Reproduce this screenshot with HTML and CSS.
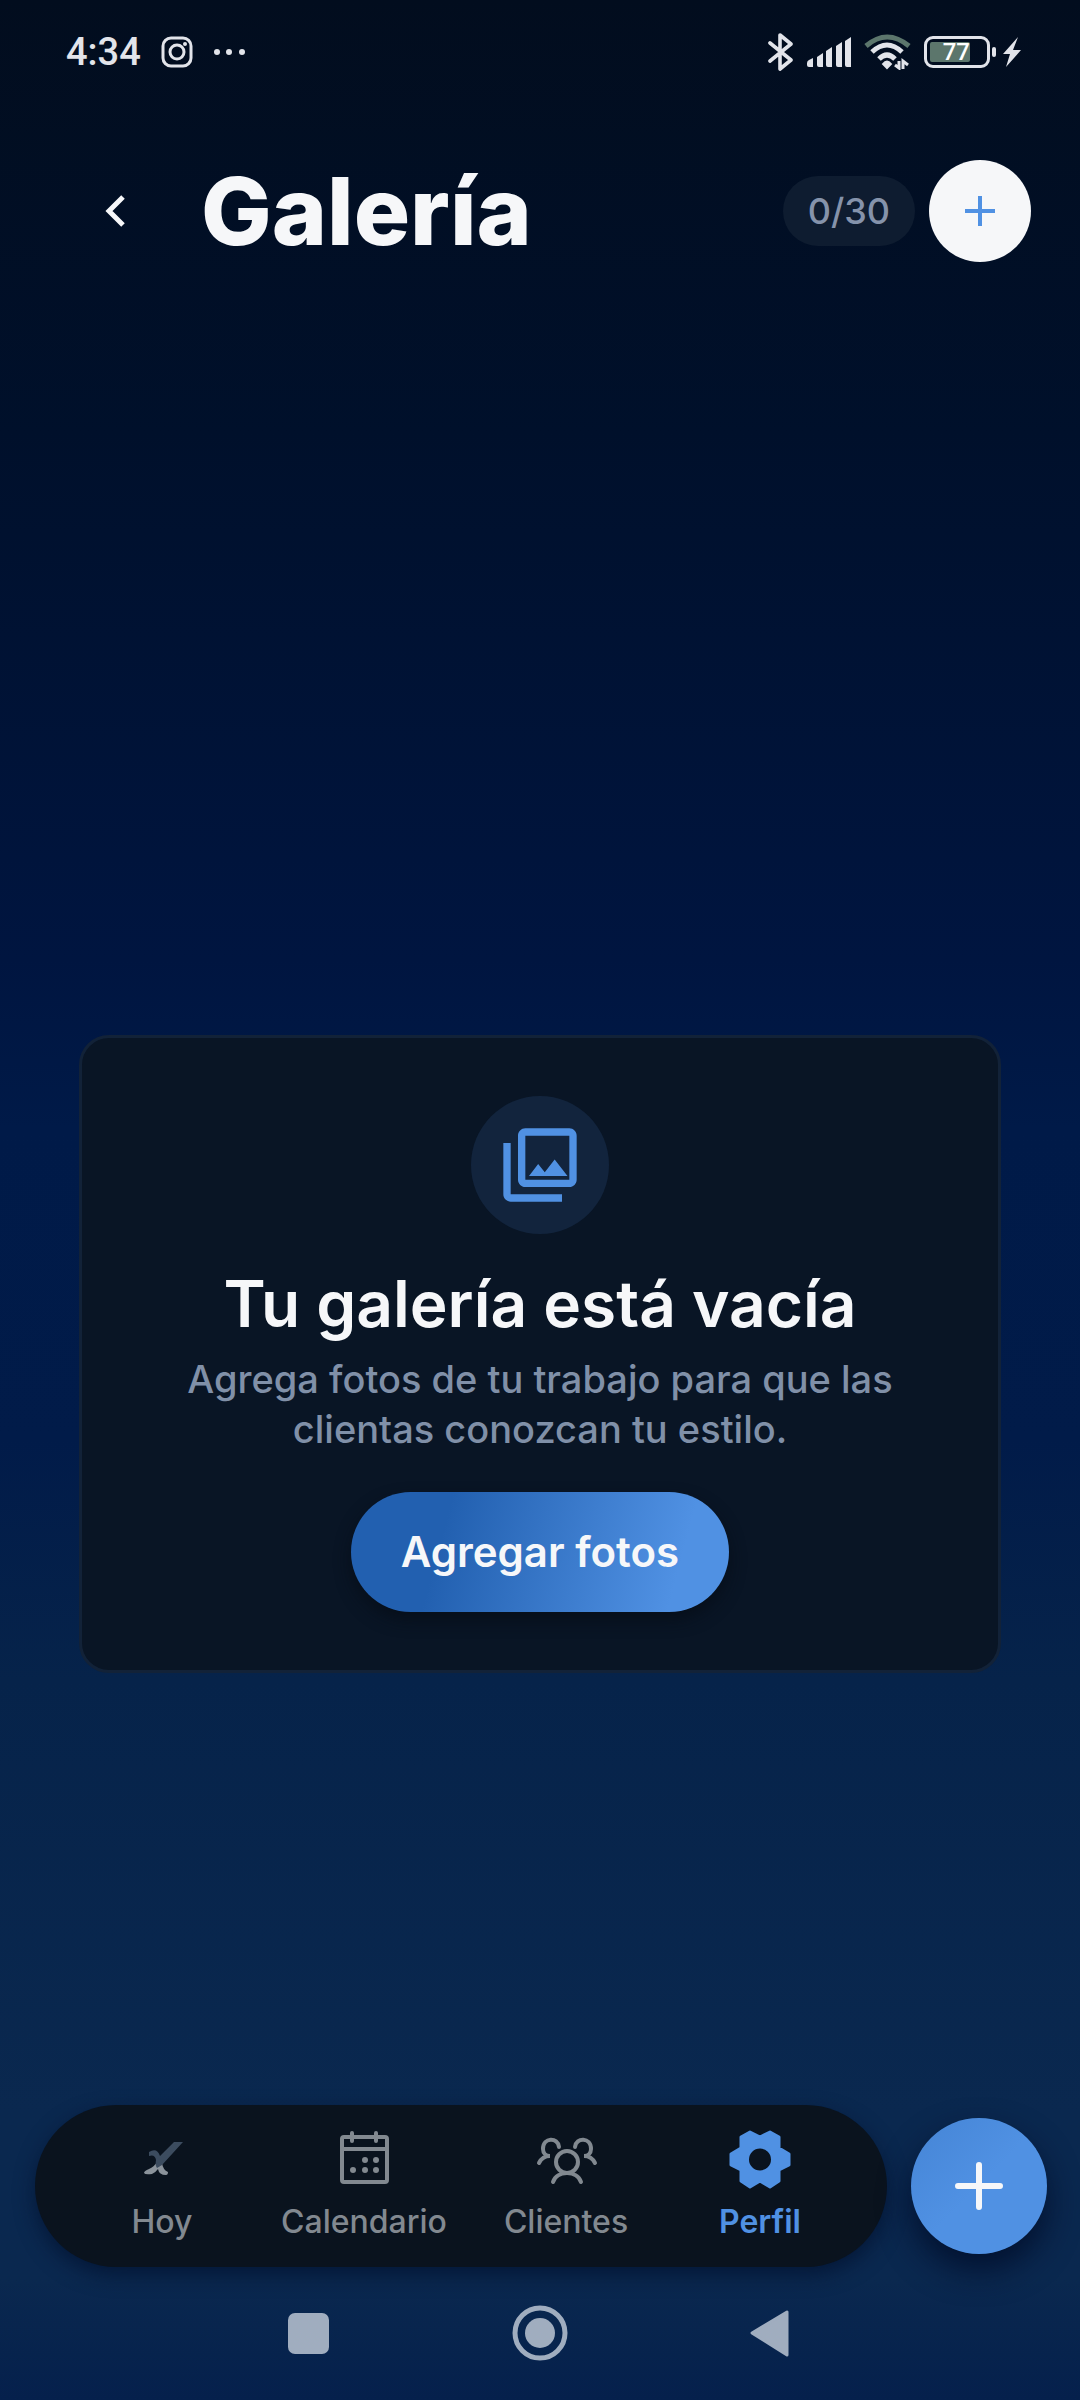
FILE: index.html
```html
<!DOCTYPE html>
<html lang="es">
<head>
    <meta charset="UTF-8">
    <meta name="viewport" content="width=device-width, initial-scale=1.0">
    <title>Galería</title>
    <link rel="stylesheet" href="styles.css">
</head>
<body>
    <div class="status-bar">
        <div class="status-left">
            <span class="time">4:34</span>
            <svg viewBox="0 0 32 32" width="32" height="32" fill="none" stroke="currentColor" stroke-width="3">
                <rect x="2" y="2" width="28" height="28" rx="8"/>
                <circle cx="16" cy="16" r="7"/>
                <circle cx="24" cy="8" r="2" fill="currentColor" stroke="none"/>
            </svg>
            <svg viewBox="0 0 32 8" width="32" height="8" fill="currentColor">
                <circle cx="4" cy="4" r="3"/>
                <circle cx="16" cy="4" r="3"/>
                <circle cx="29" cy="4" r="3"/>
            </svg>
        </div>
        <div class="status-right">
            <svg viewBox="0 0 26 40" width="26" height="40" fill="none" stroke="currentColor" stroke-width="3.6" stroke-linejoin="round" stroke-linecap="round">
                <path d="M2 11 L23 28 L12 37 V3 L23 12 L2 29"/>
            </svg>
            <svg viewBox="0 0 46 32" width="46" height="32" fill="currentColor">
                <path d="M1 27 Q1 25 3 24 L7 22 V31 H3 Q1 31 1 29 Z"/>
                <path d="M11 21 L17 17 V31 H13 Q11 31 11 29 Z"/>
                <path d="M20 15 L26 11 V31 H22 Q20 31 20 29 Z"/>
                <path d="M30 10 L36 6 V31 H32 Q30 31 30 29 Z"/>
                <path d="M39 5 L45 1 V31 H41 Q39 31 39 29 Z"/>
            </svg>
            <svg viewBox="0 0 48 36" width="48" height="36" fill="none" stroke="currentColor" stroke-width="5">
                <path class="faint" d="M2 12 Q23 -6 45 12"/>
                <path d="M8 18 Q23 4 38 18"/>
                <path d="M15 25 Q23 17 31 25"/>
                <path d="M19 30 Q23 25 27 30 L23 34 Z" fill="currentColor" stroke-width="2"/>
                <path d="M31 31 L35 34 V27" stroke-width="3"/>
                <path d="M39 35 V27 L44 31" stroke-width="3"/>
            </svg>
            <div class="battery">
                <span class="battery-body"><span class="battery-level">77</span></span>
                <span class="battery-tip"></span>
                <svg class="bolt" viewBox="0 0 20 32" width="20" height="32" fill="currentColor">
                    <path d="M16 1 L1 18 H8 L4 31 L19 14 H11 Z"/>
                </svg>
            </div>
        </div>
    </div>

    <header class="header">
        <button class="back-btn" aria-label="Volver">
            <svg viewBox="0 0 24 36" width="24" height="36" fill="none" stroke="currentColor" stroke-width="5">
                <path d="M20 4 L6 18 L20 32"/>
            </svg>
        </button>
        <h1>Galería</h1>
        <span class="counter">0/30</span>
        <button class="add-btn" aria-label="Agregar">
            <svg viewBox="0 0 30 30" width="30" height="30" stroke="currentColor" stroke-width="4">
                <path d="M0 15 H30 M15 0 V30"/>
            </svg>
        </button>
    </header>

    <main class="content">
        <section class="card">
            <div class="card-icon">
                <svg viewBox="0 0 24 24" width="88" height="88" fill="currentColor">
                    <path d="M20 4v12H8V4h12m0-2H8c-1.100 0-2 .9-2 2v12c0 1.100.9 2 2 2h12c1.100 0 2-.9 2-2V4c0-1.100-.9-2-2-2z"/>
                    <path d="M9 15 L11.500 11.700 L13.300 14 L16 10.500 L19.500 15 Z"/>
                    <path d="M2 6v14c0 1.100.9 2 2 2h14v-2H4V6H2z"/>
                </svg>
            </div>
            <h2>Tu galería está vacía</h2>
            <p>Agrega fotos de tu trabajo para que las clientas conozcan tu estilo.</p>
            <button class="primary-btn">Agregar fotos</button>
        </section>
    </main>

    <div class="bottom">
        <nav class="tabs">
            <a href="#">
                <svg viewBox="0 0 60 60" width="60" height="60">
                    <path d="M25 33 Q22 38 17 40 Q12 42 12 44 Q13 46 20 45 Q24 43 26 40 Q27 46 34 46 Q36 46 36 43 Q31 41 30 34 Z" fill="#8b939b"/>
                    <path d="M17 23 Q25 18 28 27 L42 13 H51 L30 36 L25 39 Q23 36 24 31 Q23 25 17 27 Z" fill="#3c4c5f"/>
                </svg>
                <span>Hoy</span>
            </a>
            <a href="#">
                <svg viewBox="0 0 60 60" width="60" height="60" fill="none" stroke="currentColor" stroke-width="4" stroke-linecap="round">
                    <rect x="8" y="8" width="45" height="45" rx="2"/>
                    <path d="M8 20 H53 M18 4 V12 M42 4 V12"/>
                    <g fill="currentColor" stroke="none">
                        <circle cx="31" cy="31" r="3"/>
                        <circle cx="42" cy="31" r="3"/>
                        <circle cx="19" cy="41" r="3"/>
                        <circle cx="31" cy="41" r="3"/>
                        <circle cx="42" cy="41" r="3"/>
                    </g>
                </svg>
                <span>Calendario</span>
            </a>
            <a href="#">
                <svg viewBox="0 0 64 60" width="64" height="60" fill="none" stroke="currentColor" stroke-width="4" stroke-linecap="round">
                    <ellipse cx="33" cy="33" rx="11" ry="11"/>
                    <path d="M19 53 C23 41 43 41 47 53"/>
                    <path d="M25 18 C24 8 9 8 9 20 C9 24 12 27 16 27 C10 27 7 30 5 34"/>
                    <path d="M41 18 C42 8 57 8 57 20 C57 24 54 27 50 27 C56 27 59 30 61 34"/>
                </svg>
                <span>Clientes</span>
            </a>
            <a href="#" class="active">
                <svg viewBox="0 0 64 60" width="64" height="60" fill="currentColor">
                    <path fill-rule="evenodd" stroke="currentColor" stroke-width="3" stroke-linejoin="round" d="M22 3 L32 8 L42 3 L51 8 V19 L61 25 V36 L51 41 V52 L42 58 L32 52 L22 58 L13 52 V41 L3 36 V25 L13 19 V8 Z M32 18 A12.500 12.500 0 1 0 32 43 A12.500 12.500 0 1 0 32 18 Z"/>
                </svg>
                <span>Perfil</span>
            </a>
        </nav>
        <button class="fab" aria-label="Nuevo">
            <svg viewBox="0 0 48 48" width="48" height="48" stroke="currentColor" stroke-width="6" stroke-linecap="round">
                <path d="M3 24 H45 M24 3 V45"/>
            </svg>
        </button>
    </div>

    <div class="system-nav">
        <svg viewBox="0 0 60 60" width="60" height="60" fill="currentColor">
            <rect x="9" y="10" width="41" height="41" rx="7"/>
        </svg>
        <svg viewBox="0 0 60 60" width="60" height="60" fill="currentColor">
            <circle cx="30" cy="30" r="25" fill="none" stroke="currentColor" stroke-width="5"/>
            <circle cx="30" cy="30" r="15"/>
        </svg>
        <svg viewBox="0 0 60 60" width="60" height="60" fill="currentColor" stroke="currentColor" stroke-width="3" stroke-linejoin="round">
            <path d="M46 9 V52 L11 30 Z"/>
        </svg>
    </div>
</body>
</html>
```
FILE: styles.css
```css
* {
    box-sizing: border-box;
}

body {
    margin: 0;
    min-height: 100vh;
    display: flex;
    flex-direction: column;
    font-family: Inter, sans-serif;
    color: #f6f7f9;
    background: linear-gradient(#020d1e 0%, #00102b 18%, #001540 40%, #001a48 47%, #011b49 60%, #06234a 70%, #0a284f 88%, #0a284f 95%, #05204c 100%);
}

h1, h2, p {
    margin: 0;
}

svg {
    display: block;
    flex-shrink: 0;
}

button {
    display: flex;
    align-items: center;
    justify-content: center;
    padding: 0;
    border: none;
    background: none;
    color: inherit;
    font-family: inherit;
    cursor: pointer;
}

/* Status bar */
.status-bar {
    display: flex;
    align-items: center;
    justify-content: space-between;
    height: 104px;
    padding: 0 58px 0 66px;
    color: #e2e4ea;
}

.status-left,
.status-right {
    display: flex;
    align-items: center;
}

.status-left {
    gap: 20px;
}

.status-right {
    gap: 12px;
}

.time {
    font-family: Roboto, sans-serif;
    font-size: 38px;
    font-weight: 500;
}

.faint {
    stroke: #5c766c;
}

.battery {
    display: flex;
    align-items: center;
    gap: 2px;
}

.battery-body {
    display: block;
    width: 66px;
    height: 32px;
    padding: 3px;
    border: 3px solid #e2e4ea;
    border-radius: 9px;
}

.battery-level {
    display: flex;
    align-items: center;
    justify-content: flex-end;
    width: 40px;
    height: 20px;
    border-radius: 2px;
    background: #5c766c;
    color: #fff;
    font-family: Roboto, sans-serif;
    font-size: 24px;
    font-weight: 500;
}

.battery-tip {
    width: 4px;
    height: 10px;
    border-radius: 2px;
    background: #e2e4ea;
}

.bolt {
    margin-left: 4px;
}

/* Header */
.header {
    display: flex;
    align-items: center;
    padding: 56px 49px 30px 47px;
}

.back-btn {
    width: 136px;
    height: 100px;
}

.header h1 {
    flex: 1;
    padding-left: 18px;
    font-size: 94px;
    line-height: 100px;
    font-weight: 800;
}

.counter {
    margin-right: 14px;
    padding: 0 25px;
    border-radius: 36px;
    background: #0e1c30;
    color: #8593ab;
    font-size: 36px;
    line-height: 70px;
    font-weight: 500;
}

.add-btn {
    width: 102px;
    height: 102px;
    border-radius: 50%;
    background: #f6f7f9;
    color: #5091e3;
}

/* Empty gallery */
.content {
    flex: 1;
    display: flex;
    flex-direction: column;
    justify-content: center;
    padding: 310px 79px 0;
}

.card {
    display: flex;
    flex-direction: column;
    align-items: center;
    padding: 58px 60px;
    border: 3px solid #122238;
    border-radius: 30px;
    background: #091525;
    text-align: center;
}

.card-icon {
    display: flex;
    align-items: center;
    justify-content: center;
    width: 138px;
    height: 138px;
    border-radius: 50%;
    background: #12243d;
    color: #5091e3;
}

.card h2 {
    margin-top: 28px;
    font-size: 64px;
    line-height: 84px;
    font-weight: 600;
}

.card p {
    max-width: 740px;
    margin-top: 8px;
    color: #8090a8;
    font-size: 38px;
    line-height: 50px;
    font-weight: 500;
}

.primary-btn {
    height: 120px;
    margin-top: 38px;
    padding: 0 50px;
    border-radius: 60px;
    background: linear-gradient(105deg, #2260b0 25%, #5091e3 85%);
    box-shadow: 0 8px 16px rgba(6, 14, 24, 0.8);
    font-size: 42px;
    font-weight: 600;
}

/* Bottom bar */
.bottom {
    display: flex;
    align-items: center;
    gap: 24px;
    padding: 0 33px 0 35px;
}

.tabs {
    flex: 1;
    display: grid;
    grid-template-columns: 51fr 50fr 51fr 46fr;
    height: 162px;
    padding: 0 35px 0 25px;
    border-radius: 81px;
    background: #0a131e;
    box-shadow: 0 8px 20px rgba(2, 14, 40, 0.6);
}

.tabs a {
    display: flex;
    flex-direction: column;
    align-items: center;
    padding-top: 24px;
    color: #828990;
    font-size: 32px;
    line-height: 36px;
    font-weight: 500;
    text-decoration: none;
}

.tabs span {
    margin-top: 15px;
}

.tabs .active {
    color: #5091e3;
    font-weight: 600;
}

.fab {
    width: 136px;
    height: 136px;
    border-radius: 50%;
    background: linear-gradient(135deg, #4787d8 10%, #5091e3 50%);
    box-shadow: 0 16px 32px rgba(0, 12, 40, 0.8);
}

.system-nav {
    display: flex;
    justify-content: center;
    gap: 171px;
    padding: 36px 0 37px;
    color: #a0adbf;
}
```
